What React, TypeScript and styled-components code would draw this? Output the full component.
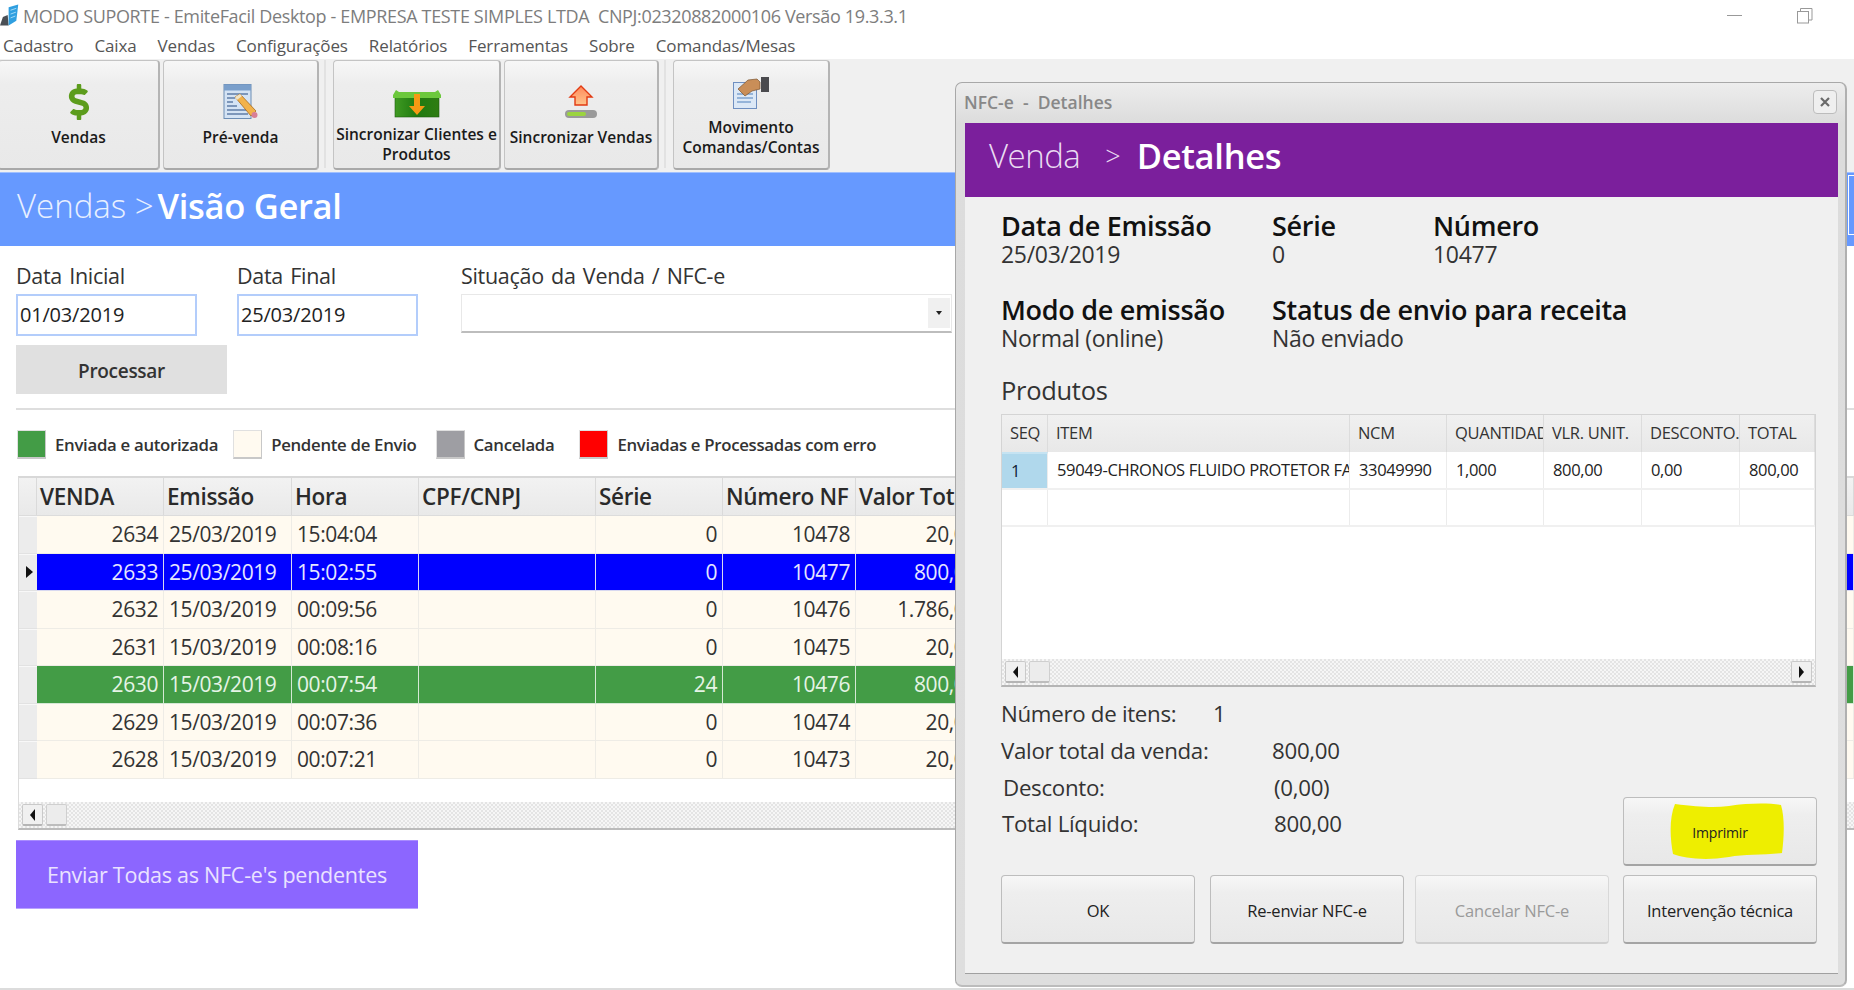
import React from 'react';
import styled, { createGlobalStyle } from 'styled-components';
import { FaDollarSign } from 'react-icons/fa';

const Global = createGlobalStyle`
  html, body { margin: 0; padding: 0; background: #fff; overflow: hidden; }
  * { box-sizing: border-box; }
  body { font-family: "Open Sans", "Noto Sans", sans-serif; }
`;

const Page = styled.div`
  position: relative;
  width: 1854px;
  height: 990px;
  overflow: hidden;
  display: flex;
  flex-direction: column;
  background: #fff;
`;

const TitleBar = styled.div`
  height: 31px;
  display: flex;
  align-items: center;
  color: #7d7d7d;
  font-size: 18px;
  white-space: pre;
`;
const TitleText = styled.span`
  margin-left: -1px;
  letter-spacing: -0.35px;
`;
const WindowControls = styled.div`
  margin-left: auto;
  margin-right: 41px;
  display: flex;
  align-items: center;
  gap: 54px;
`;
const Menu = styled.nav`
  height: 28px;
  display: flex;
  align-items: center;
  gap: 21px;
  padding-left: 3px;
  color: #555;
  font-size: 17px;
`;
const MenuItem = styled.span`
  letter-spacing: -0.12px;
`;

const Toolbar = styled.div`
  height: 113px;
  padding-top: 1px;
  background: #f0f0f0;
  display: flex;
  align-items: flex-start;
  gap: 3px;
  margin-left: -2px;
  width: 1860px;
`;
const ToolButton = styled.div<{ $w: number; $top: number }>`
  width: ${(p) => p.$w}px;
  height: 110px;
  padding-top: ${(p) => p.$top}px;
  border: 1px solid #c4c4c4;
  border-bottom: 2px solid #a9a9a9;
  border-right: 2px solid #b4b4b4;
  border-radius: 4px;
  background: linear-gradient(#f7f7f7, #ededed 22%, #e9e9e9);
  display: flex;
  flex-direction: column;
  align-items: center;
  color: #1a1a1a;
  font-size: 15.5px;
  font-weight: 600;
  line-height: 20px;
  text-align: center;
  white-space: pre;
`;
const ToolIcon = styled.div<{ $h: number; $mb: number }>`
  height: ${(p) => p.$h}px;
  margin-bottom: ${(p) => p.$mb}px;
  display: flex;
  align-items: center;
  justify-content: center;
  color: #5c9c1c;
`;
const ToolSep = styled.div`
  width: 2px;
  height: 108px;
  margin: 0 4px 0 2px;
  background: #e2e2e2;
`;

const Band = styled.div`
  height: 74px;
  flex: none;
  background: #6699ff;
  border-top: 1px solid #9fbfff;
  display: flex;
  align-items: center;
  padding: 0 0 9px 17px;
  color: #fff;
`;
const Crumb = styled.span`
  font-size: 33px;
  font-weight: 300;
  color: #e8f0ff;
  letter-spacing: 0;
`;
const CrumbStrong = styled.span`
  font-size: 34.5px;
  font-weight: 600;
  margin-left: 4px;
  letter-spacing: -0.3px;
`;
const BandEdge = styled.div`
  margin-left: auto;
  align-self: flex-start;
  margin-top: 2px;
  width: 6px;
  height: 60px;
  border: 1px solid #fff;
  border-right: 0;
`;

const Form = styled.div`
  padding: 16px 0 0 16px;
`;
const FieldRow = styled.div`
  display: flex;
  align-items: flex-start;
`;
const Field = styled.div<{ $w: number; $mr: number }>`
  width: ${(p) => p.$w}px;
  margin-right: ${(p) => p.$mr}px;
`;
const FieldLabel = styled.div`
  height: 28px;
  line-height: 28px;
  font-size: 21.5px;
  color: #333;
  white-space: nowrap;
  margin-bottom: 4px;
  letter-spacing: -0.3px;
  word-spacing: 2px;
`;
const DateInput = styled.div`
  height: 42px;
  border: 2px solid #b3cdfb;
  line-height: 38px;
  padding-left: 2px;
  color: #222;
  font-size: 20px;
  letter-spacing: -0.2px;
`;
const SelectBox = styled.div`
  margin-top: 4px;
  height: 39px;
  background: #fff;
  border: 1px solid #e8e8e8;
  border-bottom: 2px solid #bdbdbd;
  display: flex;
  justify-content: flex-end;
`;
const SelectArrow = styled.div`
  width: 22px;
  margin: 3px 1px;
  background: #f0f0f0;
  display: flex;
  align-items: center;
  justify-content: center;
  &::after {
    content: '';
    border: 3px solid transparent;
    border-top: 4px solid #222;
    border-bottom: 0;
  }
`;
const ProcessButton = styled.div`
  margin-top: 9px;
  width: 211px;
  height: 49px;
  padding-top: 2px;
  background: #e0e0e0;
  color: #333;
  font-size: 19px;
  font-weight: 600;
  display: flex;
  align-items: center;
  justify-content: center;
  letter-spacing: -0.3px;
`;
const Divider = styled.div`
  height: 2px;
  margin-top: 14px;
  background: #dedede;
`;
const Legend = styled.div`
  margin-top: 20px;
  height: 29px;
  display: flex;
  align-items: center;
`;
const Swatch = styled.div<{ $c: string; $ml: number }>`
  width: 29px;
  height: 29px;
  margin-left: ${(p) => p.$ml}px;
  margin-right: 9px;
  background: ${(p) => p.$c};
  border-right: 1px solid #c8c8c8;
  border-bottom: 2px solid #c8c8c8;
  border-top: 1px solid #e0e0e0;
  border-left: 1px solid #e0e0e0;
`;
const LegendText = styled.span`
  font-size: 16.8px;
  font-weight: 600;
  color: #333;
  white-space: nowrap;
  letter-spacing: -0.3px;
`;

const DataGrid = styled.div`
  margin: 17px 0 0 18px;
  height: 354px;
  display: flex;
  flex-direction: column;
  border-top: 2px solid #d8d8d8;
  border-left: 1px solid #dcdcdc;
  border-bottom: 2px solid #bbb;
`;
const gridCols = '18px 127px 128px 127px 177px 127px 133px 127px 1fr';
const HeaderRow = styled.div`
  height: 38px;
  flex: none;
  display: grid;
  grid-template-columns: ${gridCols};
  background: linear-gradient(#f2f2f2, #e9e9e9);
  border-bottom: 1px solid #dcdcdc;
`;
const HeaderCell = styled.div`
  border-right: 1px solid #dadada;
  padding-left: 3px;
  line-height: 38px;
  font-size: 22.5px;
  font-weight: 600;
  color: #2a2a2a;
  white-space: nowrap;
  overflow: hidden;
  letter-spacing: -0.3px;
`;
const Row = styled.div<{ $bg: string; $fg: string; $line: string }>`
  height: 37.5px;
  flex: none;
  display: grid;
  grid-template-columns: ${gridCols};
  background: ${(p) => p.$bg};
  color: ${(p) => p.$fg};
  font-size: 21px;
  border-bottom: 1px solid ${(p) => p.$line};
  --line: ${(p) => p.$line};
`;
const RowHead = styled.div`
  background: #ececec;
  border-top: 1px solid #f8f8f8;
  border-bottom: 1px solid #e2e2e2;
  margin-bottom: -1px;
  display: flex;
  align-items: center;
  justify-content: center;
  padding-left: 3px;
`;
const RowArrow = styled.i`
  border: 6px solid transparent;
  border-left: 7px solid #111;
  border-right: 0;
`;
const Cell = styled.div<{ $right?: boolean }>`
  border-right: 1px solid var(--line);
  padding: 0 5px 0 5px;
  line-height: 37px;
  text-align: ${(p) => (p.$right ? 'right' : 'left')};
  white-space: nowrap;
  overflow: hidden;
  letter-spacing: -0.4px;
`;
const GridFill = styled.div`
  flex: 1;
`;
const ScrollBar = styled.div<{ $h: number }>`
  height: ${(p) => p.$h}px;
  flex: none;
  display: flex;
  align-items: center;
  gap: 3px;
  padding: 0 3px;
  background-image: conic-gradient(#e4e4e4 25%, #f6f6f6 0 50%, #e4e4e4 0 75%, #f6f6f6 0);
  background-size: 4px 4px;
`;
const ScrollBtn = styled.div<{ $right?: boolean }>`
  width: 21px;
  height: 22px;
  background: #f0f0f0;
  border: 1px solid #c9c9c9;
  border-bottom: 2px solid #b5b5b5;
  border-radius: 2px;
  display: flex;
  align-items: center;
  justify-content: center;
  margin-left: ${(p) => (p.$right ? 'auto' : '0')};
  &::after {
    content: '';
    border: 6px solid transparent;
    ${(p) =>
      p.$right
        ? 'border-left: 5px solid #111; border-right: 0;'
        : 'border-right: 5px solid #111; border-left: 0;'}
  }
`;
const ScrollThumb = styled.div`
  width: 21px;
  height: 22px;
  background: #ececec;
  border: 1px solid #cfcfcf;
  border-bottom: 2px solid #bdbdbd;
  border-radius: 2px;
`;
const SendWrap = styled.div`
  padding-left: 16px;
`;
const SendButton = styled.div`
  margin-top: 10px;
  width: 402px;
  height: 69px;
  background: #8c66ff;
  border-top: 1px solid #a98cff;
  border-bottom: 1px solid #b9a2ff;
  color: #eae2ff;
  font-size: 21.5px;
  display: flex;
  align-items: center;
  justify-content: center;
  letter-spacing: -0.25px;
`;
const Footer = styled.div`
  margin-top: auto;
  height: 2px;
  flex: none;
  background: #dcdcdc;
`;

/* Floating dialog */
const Dialog = styled.section`
  position: absolute;
  left: 955px;
  top: 82px;
  width: 892px;
  height: 905px;
  display: flex;
  flex-direction: column;
  padding: 0 7px 11px 9px;
  background: linear-gradient(#ededed, #dcdcdc 40px, #dedede);
  border: 1px solid #a8a8a8;
  border-right: 2px solid #b0b0b0;
  border-bottom: 2px solid #bcbcbc;
  border-radius: 7px;
`;
const DialogTitle = styled.header`
  height: 40px;
  flex: none;
  display: flex;
  align-items: center;
  justify-content: space-between;
  padding-bottom: 2px;
  color: #888;
  font-size: 17.5px;
  font-weight: 600;
  white-space: pre;
  margin-left: -1px;
`;
const CloseBox = styled.div`
  width: 24px;
  height: 24px;
  margin-right: 1px;
  border: 1.5px solid #bcbcbc;
  border-radius: 4px;
  background: #efefef;
  display: flex;
  align-items: center;
  justify-content: center;
`;
const Client = styled.div`
  flex: 1;
  display: flex;
  flex-direction: column;
  background: #f0f0f0;
  border-bottom: 1px solid #a0a0a0;
`;
const DialogBand = styled.div`
  height: 74px;
  flex: none;
  background: #7b1f9c;
  display: flex;
  align-items: center;
  padding: 0 0 9px 24px;
  color: #fff;
`;
const DialogCrumb = styled.span`
  font-size: 33px;
  font-weight: 300;
  color: #eadcf2;
  letter-spacing: -0.5px;
`;
const DialogSep = styled.span`
  font-weight: 300;
  font-size: 27px;
  color: #eadcf2;
  margin: 0 16px 0 25px;
`;
const DialogCrumbStrong = styled.span`
  font-size: 34.5px;
  font-weight: 600;
  letter-spacing: -0.3px;
`;
const Details = styled.div`
  padding: 14px 0 0 36px;
  display: grid;
  grid-template-columns: 271px 161px 1fr;
  grid-auto-rows: 84px;
`;
const DetailBlock = styled.div<{ $span?: number }>`
  grid-column: span ${(p) => p.$span ?? 1};
`;
const DetailLabel = styled.div`
  font-size: 27px;
  font-weight: 600;
  line-height: 30px;
  color: #111;
  white-space: nowrap;
  letter-spacing: -0.3px;
`;
const DetailValue = styled.div`
  font-size: 23px;
  line-height: 27px;
  color: #333;
  letter-spacing: -0.3px;
`;
const SectionTitle = styled.div`
  padding-left: 36px;
  margin-top: -6px;
  font-size: 25.5px;
  line-height: 34px;
  color: #333;
  letter-spacing: -0.3px;
`;
const ProductsGrid = styled.div`
  margin: 7px 0 0 36px;
  width: 815px;
  height: 273px;
  display: flex;
  flex-direction: column;
  background: #fff;
  border: 1px solid #d4d4d4;
  border-bottom: 2px solid #b5b5b5;
`;
const productCols = '46px 302px 97px 97px 98px 98px 1fr';
const ProductHeader = styled.div`
  height: 37px;
  flex: none;
  display: grid;
  grid-template-columns: ${productCols};
  background: linear-gradient(#f0f0f0, #e8e8e8);
`;
const ProductHeadCell = styled.div`
  border-right: 1px solid #dcdcdc;
  padding-left: 8px;
  line-height: 36px;
  font-size: 16.5px;
  color: #333;
  white-space: nowrap;
  overflow: hidden;
  letter-spacing: -0.3px;
`;
const ProductRow = styled.div`
  height: 37.5px;
  flex: none;
  display: grid;
  grid-template-columns: ${productCols};
  border-bottom: 2px solid #f0f0f0;
`;
const ProductCell = styled.div`
  border-right: 1px solid #ececec;
  padding-left: 9px;
  line-height: 36px;
  font-size: 16.5px;
  color: #222;
  white-space: nowrap;
  overflow: hidden;
  letter-spacing: -0.35px;
`;
const SeqCell = styled(ProductCell)`
  background: #b0d8ec;
  border-top: 2px solid #c5e3f2;
  line-height: 34px;
  color: #123;
`;
const ProductsFill = styled.div`
  flex: 1;
`;
const LowerArea = styled.div`
  margin: 9px 0 0 36px;
  width: 816px;
  height: 170px;
  display: grid;
  grid-template-columns: 1fr 194px;
  align-items: end;
`;
const Summary = styled.div`
  align-self: start;
  display: grid;
  grid-template-columns: 212px 59px 1fr;
  grid-auto-rows: 36.8px;
  font-size: 22.3px;
  color: #333;
  line-height: 36px;
  letter-spacing: -0.3px;
  white-space: nowrap;
`;
const SummaryLabel = styled.div<{ $ml?: number; $span?: number }>`
  padding-left: ${(p) => p.$ml ?? 0}px;
  grid-column: span ${(p) => p.$span ?? 1};
`;
const SummaryValue = styled.div<{ $ml?: number }>`
  padding-left: ${(p) => p.$ml ?? 0}px;
`;
const PushButton = styled.div<{ $disabled?: boolean; $fs?: number }>`
  position: relative;
  width: 194px;
  height: 69px;
  padding-top: 2px;
  border: 1px solid ${(p) => (p.$disabled ? '#d8d8d8' : '#bdbdbd')};
  border-bottom: 2px solid ${(p) => (p.$disabled ? '#cfcfcf' : '#a4a4a4')};
  border-radius: 4px;
  background: linear-gradient(#f7f7f7, #eeeeee 25%, #e8e8e8);
  color: ${(p) => (p.$disabled ? '#9a9a9a' : '#222')};
  font-size: ${(p) => p.$fs ?? 16.5}px;
  display: flex;
  align-items: center;
  justify-content: center;
  letter-spacing: -0.2px;
`;
const ButtonText = styled.span`
  position: relative;
`;
const Highlight = styled.svg`
  position: absolute;
  left: 45px;
  top: 5px;
`;
const ButtonRow = styled.div`
  margin: 9px 0 0 36px;
  display: grid;
  grid-template-columns: 209px 205px 208px 194px;
`;

const Logo = () => (
  <svg width="24" height="24" viewBox="0 0 25 24">
    <path d="M0 22 L3 13 L8 11 L9 22 Z" fill="#4a4f55" />
    <path d="M9 3 L19 0 L17 17 L9 22 Z" fill="#2f9fe0" />
    <path d="M11 6 L17 4 M11 10 L16.5 8 M11 14 L16 12" stroke="#a8dbf6" strokeWidth="1" />
  </svg>
);
const Minimize = () => (
  <svg width="16" height="16" viewBox="0 0 16 16">
    <path d="M0 7.5 H15" stroke="#999" strokeWidth="1" />
  </svg>
);
const Restore = () => (
  <svg width="16" height="16" viewBox="0 0 16 16">
    <rect x="0.5" y="3.5" width="11" height="11.5" fill="#fff" stroke="#999" />
    <path d="M3.5 3.5 V0.5 H15 V12 H11.5" fill="none" stroke="#999" />
  </svg>
);
const CloseX = () => (
  <svg width="12" height="12" viewBox="0 0 12 12">
    <path d="M2 2 L10 10 M10 2 L2 10" stroke="#6a6a6a" strokeWidth="2.2" />
  </svg>
);
const PreSaleIcon = () => (
  <svg width="36" height="36" viewBox="0 0 36 36">
    <rect x="1" y="0.5" width="27" height="34" fill="#d4e3f4" stroke="#6c8db4" />
    <rect x="1" y="0.5" width="27" height="6" fill="#7a9fcb" />
    <path d="M4 10 H25 M4 14 H12 M4 18 H10 M4 22 H14 M4 26 H25 M4 30 H25" stroke="#5f7ea6" strokeWidth="1.3" />
    <path d="M12 13 L17 10 L33 27 L28 32 Z" fill="#f2b24a" stroke="#a86a1c" strokeWidth="0.8" />
    <path d="M12 13 L17 10 L19 12 L14 16 Z" fill="#efe4c8" />
    <circle cx="31.5" cy="31" r="3" fill="#d87f96" />
  </svg>
);
const BoxIcon = () => (
  <svg width="48" height="30" viewBox="0 0 48 30">
    <defs>
      <linearGradient id="boxg" x1="0" x2="1" y1="0" y2="0">
        <stop offset="0" stopColor="#3f9a22" />
        <stop offset="0.5" stopColor="#1f7a10" />
        <stop offset="1" stopColor="#2f7d12" />
      </linearGradient>
    </defs>
    <rect x="2" y="6" width="44" height="23" fill="url(#boxg)" stroke="#1d5c10" strokeWidth="0.6" />
    <path d="M0 7 L3 2 L6 4 H42 L45 2 L48 7 V10 H0 Z" fill="#6cc83c" />
    <path d="M21 6 H27 V18 H32 L24 27 L16 18 H21 Z" fill="#f69a14" />
  </svg>
);
const UploadIcon = () => (
  <svg width="34" height="33" viewBox="0 0 34 33">
    <defs>
      <linearGradient id="upg" x1="0" x2="0" y1="0" y2="1">
        <stop offset="0" stopColor="#ff8a5c" />
        <stop offset="1" stopColor="#ffc48a" />
      </linearGradient>
    </defs>
    <path d="M17 1 L28 12 H23 V20 H11 V12 H6 Z" fill="url(#upg)" stroke="#e23a12" strokeWidth="1.4" />
    <rect x="1" y="25" width="32" height="8" rx="4" fill="#9a9a9a" />
    <rect x="3" y="27" width="19" height="4" rx="2" fill="#9bd43f" />
  </svg>
);
const MoveIcon = () => (
  <svg width="37" height="33" viewBox="0 0 37 33">
    <rect x="0.5" y="6.5" width="23" height="26" fill="#dce8f6" stroke="#6f8fc0" />
    <path d="M4 18 H20 M4 22 H20 M4 26 H18" stroke="#7ea3cf" strokeWidth="1.3" />
    <path d="M5 13 L15 4 L24 3 L27 6 V13 L19 15 L12 20 Z" fill="#c98e58" stroke="#7a5430" strokeWidth="0.7" />
    <rect x="28" y="1" width="8" height="15" fill="#4a4a4e" />
  </svg>
);

type GridRow = {
  venda: string;
  data: string;
  hora: string;
  serie: string;
  nf: string;
  valor: string;
  kind: 'plain' | 'selected' | 'ok';
};
const rows: GridRow[] = [
  { venda: '2634', data: '25/03/2019', hora: '15:04:04', serie: '0', nf: '10478', valor: '20,00', kind: 'plain' },
  { venda: '2633', data: '25/03/2019', hora: '15:02:55', serie: '0', nf: '10477', valor: '800,00', kind: 'selected' },
  { venda: '2632', data: '15/03/2019', hora: '00:09:56', serie: '0', nf: '10476', valor: '1.786,00', kind: 'plain' },
  { venda: '2631', data: '15/03/2019', hora: '00:08:16', serie: '0', nf: '10475', valor: '20,00', kind: 'plain' },
  { venda: '2630', data: '15/03/2019', hora: '00:07:54', serie: '24', nf: '10476', valor: '800,00', kind: 'ok' },
  { venda: '2629', data: '15/03/2019', hora: '00:07:36', serie: '0', nf: '10474', valor: '20,00', kind: 'plain' },
  { venda: '2628', data: '15/03/2019', hora: '00:07:21', serie: '0', nf: '10473', valor: '20,00', kind: 'plain' },
];
const rowTheme = {
  plain: { bg: '#fffaf0', fg: '#333', line: '#eeece6' },
  selected: { bg: '#0000ff', fg: '#e6e6ff', line: '#d8d8f0' },
  ok: { bg: '#439c46', fg: '#e6f4e6', line: '#d5e8d5' },
};
const headers = ['', 'VENDA', 'Emissão', 'Hora', 'CPF/CNPJ', 'Série', 'Número NF', 'Valor Total', ''];
const menus = ['Cadastro', 'Caixa', 'Vendas', 'Configurações', 'Relatórios', 'Ferramentas', 'Sobre', 'Comandas/Mesas'];
const productHeaders = ['SEQ', 'ITEM', 'NCM', 'QUANTIDADE', 'VLR. UNIT.', 'DESCONTO.', 'TOTAL'];
const productCells = [
  { id: 'item', text: '59049-CHRONOS FLUIDO PROTETOR FACIAL' },
  { id: 'ncm', text: '33049990' },
  { id: 'qtd', text: '1,000' },
  { id: 'unit', text: '800,00' },
  { id: 'desc', text: '0,00' },
  { id: 'total', text: '800,00' },
];

export default function App() {
  return (
    <Page>
      <Global />
      <TitleBar>
        <Logo />
        <TitleText>MODO SUPORTE - EmiteFacil Desktop - EMPRESA TESTE SIMPLES LTDA  CNPJ:02320882000106 Versão 19.3.3.1</TitleText>
        <WindowControls>
          <Minimize />
          <Restore />
        </WindowControls>
      </TitleBar>
      <Menu>
        {menus.map((m) => (
          <MenuItem key={m}>{m}</MenuItem>
        ))}
      </Menu>
      <Toolbar>
        <ToolButton $w={162} $top={23}>
          <ToolIcon $h={36} $mb={7}>
            <FaDollarSign size={36} />
          </ToolIcon>
          Vendas
        </ToolButton>
        <ToolButton $w={156} $top={23}>
          <ToolIcon $h={36} $mb={7}>
            <PreSaleIcon />
          </ToolIcon>
          Pré-venda
        </ToolButton>
        <ToolSep />
        <ToolButton $w={168} $top={27}>
          <ToolIcon $h={30} $mb={6}>
            <BoxIcon />
          </ToolIcon>
          {'Sincronizar Clientes e\nProdutos'}
        </ToolButton>
        <ToolButton $w={155} $top={24}>
          <ToolIcon $h={33} $mb={9}>
            <UploadIcon />
          </ToolIcon>
          Sincronizar Vendas
        </ToolButton>
        <ToolSep />
        <ToolButton $w={157} $top={15}>
          <ToolIcon $h={33} $mb={8}>
            <MoveIcon />
          </ToolIcon>
          {'Movimento\nComandas/Contas'}
        </ToolButton>
      </Toolbar>
      <Band>
        <Crumb>Vendas &gt;</Crumb>
        <CrumbStrong>Visão Geral</CrumbStrong>
        <BandEdge />
      </Band>
      <Form>
        <FieldRow>
          <Field $w={181} $mr={40}>
            <FieldLabel>Data Inicial</FieldLabel>
            <DateInput>01/03/2019</DateInput>
          </Field>
          <Field $w={181} $mr={43}>
            <FieldLabel>Data Final</FieldLabel>
            <DateInput>25/03/2019</DateInput>
          </Field>
          <Field $w={491} $mr={0}>
            <FieldLabel>Situação da Venda / NFC-e</FieldLabel>
            <SelectBox>
              <SelectArrow />
            </SelectBox>
          </Field>
        </FieldRow>
        <ProcessButton>Processar</ProcessButton>
        <Divider />
        <Legend>
          <Swatch $c="#439c46" $ml={1} />
          <LegendText>Enviada e autorizada</LegendText>
          <Swatch $c="#fffaf0" $ml={15} />
          <LegendText>Pendente de Envio</LegendText>
          <Swatch $c="#9e9ea3" $ml={19} />
          <LegendText>Cancelada</LegendText>
          <Swatch $c="#ff0000" $ml={25} />
          <LegendText>Enviadas e Processadas com erro</LegendText>
        </Legend>
      </Form>
      <DataGrid>
        <HeaderRow>
          {headers.map((h, i) => (
            <HeaderCell key={i}>{h}</HeaderCell>
          ))}
        </HeaderRow>
        {rows.map((r) => {
          const t = rowTheme[r.kind];
          return (
            <Row key={r.venda} $bg={t.bg} $fg={t.fg} $line={t.line}>
              <RowHead>{r.kind === 'selected' && <RowArrow />}</RowHead>
              <Cell $right>{r.venda}</Cell>
              <Cell>{r.data}</Cell>
              <Cell>{r.hora}</Cell>
              <Cell />
              <Cell $right>{r.serie}</Cell>
              <Cell $right>{r.nf}</Cell>
              <Cell $right>{r.valor}</Cell>
              <Cell />
            </Row>
          );
        })}
        <GridFill />
        <ScrollBar $h={26}>
          <ScrollBtn />
          <ScrollThumb />
        </ScrollBar>
      </DataGrid>
      <SendWrap>
        <SendButton>Enviar Todas as NFC-e's pendentes</SendButton>
      </SendWrap>
      <Footer />
      <Dialog>
        <DialogTitle>
          NFC-e  -  Detalhes
          <CloseBox>
            <CloseX />
          </CloseBox>
        </DialogTitle>
        <Client>
          <DialogBand>
            <DialogCrumb>Venda</DialogCrumb>
            <DialogSep>&gt;</DialogSep>
            <DialogCrumbStrong>Detalhes</DialogCrumbStrong>
          </DialogBand>
          <Details>
            <DetailBlock>
              <DetailLabel>Data de Emissão</DetailLabel>
              <DetailValue>25/03/2019</DetailValue>
            </DetailBlock>
            <DetailBlock>
              <DetailLabel>Série</DetailLabel>
              <DetailValue>0</DetailValue>
            </DetailBlock>
            <DetailBlock>
              <DetailLabel>Número</DetailLabel>
              <DetailValue>10477</DetailValue>
            </DetailBlock>
            <DetailBlock>
              <DetailLabel>Modo de emissão</DetailLabel>
              <DetailValue>Normal (online)</DetailValue>
            </DetailBlock>
            <DetailBlock $span={2}>
              <DetailLabel>Status de envio para receita</DetailLabel>
              <DetailValue>Não enviado</DetailValue>
            </DetailBlock>
          </Details>
          <SectionTitle>Produtos</SectionTitle>
          <ProductsGrid>
            <ProductHeader>
              {productHeaders.map((h) => (
                <ProductHeadCell key={h}>{h}</ProductHeadCell>
              ))}
            </ProductHeader>
            <ProductRow>
              <SeqCell>1</SeqCell>
              {productCells.map((c) => (
                <ProductCell key={c.id}>{c.text}</ProductCell>
              ))}
            </ProductRow>
            <ProductRow>
              {productHeaders.map((h) => (
                <ProductCell key={h} />
              ))}
            </ProductRow>
            <ProductsFill />
            <ScrollBar $h={26}>
              <ScrollBtn />
              <ScrollThumb />
              <ScrollBtn $right />
            </ScrollBar>
          </ProductsGrid>
          <LowerArea>
            <Summary>
              <SummaryLabel>Número de itens:</SummaryLabel>
              <SummaryValue>1</SummaryValue>
              <div />
              <SummaryLabel $span={2}>Valor total da venda:</SummaryLabel>
              <SummaryValue>800,00</SummaryValue>
              <SummaryLabel $span={2} $ml={2}>Desconto:</SummaryLabel>
              <SummaryValue $ml={2}>(0,00)</SummaryValue>
              <SummaryLabel $span={2} $ml={1}>Total Líquido:</SummaryLabel>
              <SummaryValue $ml={2}>800,00</SummaryValue>
            </Summary>
            <PushButton $fs={14}>
              <Highlight width="116" height="57" viewBox="0 0 116 57">
                <path
                  d="M6 1 C30 4 45 5 60 3 C80 0 100 0 112 2 C116 15 115 35 113 50 C95 52 75 51 60 54 C35 58 15 55 4 51 C1 35 0 15 6 1 Z"
                  fill="#eeee00"
                />
              </Highlight>
              <ButtonText>Imprimir</ButtonText>
            </PushButton>
          </LowerArea>
          <ButtonRow>
            <PushButton>OK</PushButton>
            <PushButton>Re-enviar NFC-e</PushButton>
            <PushButton $disabled>Cancelar NFC-e</PushButton>
            <PushButton>Intervenção técnica</PushButton>
          </ButtonRow>
        </Client>
      </Dialog>
    </Page>
  );
}
